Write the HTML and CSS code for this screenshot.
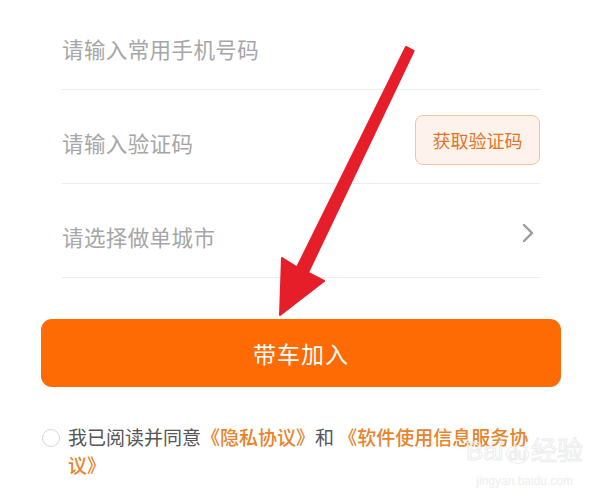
FILE: index.html
```html
<!DOCTYPE html>
<html lang="zh-CN">
<head>
  <meta charset="UTF-8">
  <meta name="viewport" content="width=device-width, initial-scale=1.0">
  <title>带车加入</title>
  <link rel="stylesheet" href="styles.css">
</head>
<body>
  <div class="page">
    <div class="form">
      <div class="row">
        <span class="placeholder">请输入常用手机号码</span>
      </div>
      <div class="row">
        <span class="placeholder">请输入验证码</span>
        <button class="code-btn">获取验证码</button>
      </div>
      <div class="row">
        <span class="placeholder">请选择做单城市</span>
        <svg class="chevron" viewBox="0 0 12 20" width="12" height="20">
          <path d="M2 2 L10 10 L2 18" fill="none" stroke="#9a9a9a" stroke-width="2.4" stroke-linecap="round" stroke-linejoin="round"/>
        </svg>
      </div>
    </div>

    <button class="join-btn">带车加入</button>

    <div class="agree">
      <span class="radio"></span>
      <p class="agree-text">我已阅读并同意<a class="link">《隐私协议》</a>和 <a class="link">《软件使用信息服务协议》</a></p>
    </div>

    <div class="watermark">
      <div class="wm-logo">Bai<span class="wm-du">du</span>经验</div>
      <div class="wm-url">jingyan.baidu.com</div>
    </div>

    <svg class="arrow" viewBox="0 0 603 501" width="603" height="501">
      <polygon points="406,51 413.6,55 308,276.6 324,285 280,319 282,262 297,271.4"
               fill="#e61e2a" stroke="#e61e2a" stroke-width="2" stroke-linejoin="round"/>
    </svg>
  </div>
</body>
</html>
```

FILE: styles.css
```css
html, body {
  margin: 0;
  padding: 0;
  background: #fff;
}
body {
  font-family: "Noto Sans CJK SC", "Noto Sans", sans-serif;
  width: 603px;
  height: 501px;
  overflow: hidden;
}
.page {
  position: relative;
  width: 603px;
  height: 501px;
}

/* form rows */
.form {
  margin: -4px 63px 0 62px;
}
.row {
  height: 94px;
  box-sizing: border-box;
  border-bottom: 1px solid #ececec;
  padding-top: 12px;
  display: flex;
  align-items: center;
  justify-content: space-between;
}
.placeholder {
  font-size: 21.5px;
  color: #a6a6a6;
  letter-spacing: 0.4px;
}
.code-btn {
  width: 125px;
  height: 50px;
  box-sizing: border-box;
  border: 1px solid #efc4a2;
  border-radius: 8px;
  background: #fdf3ec;
  color: #e07527;
  font-family: inherit;
  font-size: 18px;
  padding: 0;
  margin-top: -6px;
}
.chevron {
  margin-right: 6px;
  margin-top: -8px;
}

/* main button */
.join-btn {
  display: block;
  width: 520px;
  height: 68px;
  margin: 41px 0 0 41px;
  border: none;
  border-radius: 11px;
  background: #fe6a03;
  color: #fff;
  font-family: inherit;
  font-size: 23px;
  letter-spacing: 1px;
}

/* agreement */
.agree {
  display: flex;
  align-items: flex-start;
  margin: 36px 0 0 42px;
}
.radio {
  width: 16px;
  height: 16px;
  border: 1.5px solid #d6d6d6;
  border-radius: 50%;
  margin-top: 6px;
  flex: none;
}
.agree-text {
  margin: 0 0 0 8px;
  width: 472px;
  font-size: 19px;
  line-height: 28px;
  color: #555;
}
.link {
  color: #e8832a;
  font-weight: 500;
}

/* watermark */
.watermark {
  position: absolute;
  left: 466px;
  top: 440px;
  color: transparent;
  text-align: center;
}
.wm-logo {
  font-family: "Liberation Sans", sans-serif;
  font-size: 26px;
  line-height: 30px;
  -webkit-text-stroke: 1px #ececec;
}
.wm-du {
  font-size: 16px;
  border: 1px solid #ececec;
  border-radius: 50%;
  padding: 0 2px;
  margin: 0 2px;
}
.wm-url {
  font-family: "Liberation Sans", sans-serif;
  font-size: 12px;
  color: #ededed;
  margin-top: 4px;
}

/* annotation arrow over the content */
.arrow {
  position: absolute;
  left: 0;
  top: 0;
  pointer-events: none;
}
```
